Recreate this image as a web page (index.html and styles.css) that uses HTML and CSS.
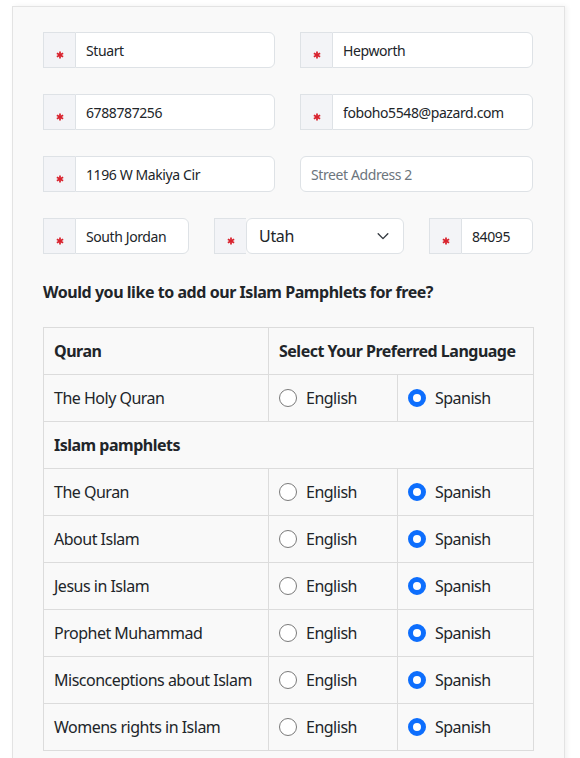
FILE: index.html
```html
<!DOCTYPE html>
<html>
<head>
<meta charset="utf-8">
<link rel="stylesheet" href="styles.css">
</head>
<body>
<div class="card">
  <div class="row row-2">
    <div class="group"><span class="req"><svg viewBox="0 0 10 10"><g stroke="#d9232e" stroke-width="2.2"><line x1="5" y1="0.5" x2="5" y2="9.5"/><line x1="1.1" y1="2.75" x2="8.9" y2="7.25"/><line x1="1.1" y1="7.25" x2="8.9" y2="2.75"/></g></svg></span><input class="field" value="Stuart"></div>
    <div class="group"><span class="req"><svg viewBox="0 0 10 10"><g stroke="#d9232e" stroke-width="2.2"><line x1="5" y1="0.5" x2="5" y2="9.5"/><line x1="1.1" y1="2.75" x2="8.9" y2="7.25"/><line x1="1.1" y1="7.25" x2="8.9" y2="2.75"/></g></svg></span><input class="field" value="Hepworth"></div>
  </div>
  <div class="row row-2">
    <div class="group"><span class="req"><svg viewBox="0 0 10 10"><g stroke="#d9232e" stroke-width="2.2"><line x1="5" y1="0.5" x2="5" y2="9.5"/><line x1="1.1" y1="2.75" x2="8.9" y2="7.25"/><line x1="1.1" y1="7.25" x2="8.9" y2="2.75"/></g></svg></span><input class="field" value="6788787256"></div>
    <div class="group"><span class="req"><svg viewBox="0 0 10 10"><g stroke="#d9232e" stroke-width="2.2"><line x1="5" y1="0.5" x2="5" y2="9.5"/><line x1="1.1" y1="2.75" x2="8.9" y2="7.25"/><line x1="1.1" y1="7.25" x2="8.9" y2="2.75"/></g></svg></span><input class="field" value="foboho5548@pazard.com"></div>
  </div>
  <div class="row row-2">
    <div class="group"><span class="req"><svg viewBox="0 0 10 10"><g stroke="#d9232e" stroke-width="2.2"><line x1="5" y1="0.5" x2="5" y2="9.5"/><line x1="1.1" y1="2.75" x2="8.9" y2="7.25"/><line x1="1.1" y1="7.25" x2="8.9" y2="2.75"/></g></svg></span><input class="field" value="1196 W Makiya Cir"></div>
    <div class="group"><input class="field solo" placeholder="Street Address 2"></div>
  </div>
  <div class="row row-3">
    <div class="group"><span class="req"><svg viewBox="0 0 10 10"><g stroke="#d9232e" stroke-width="2.2"><line x1="5" y1="0.5" x2="5" y2="9.5"/><line x1="1.1" y1="2.75" x2="8.9" y2="7.25"/><line x1="1.1" y1="7.25" x2="8.9" y2="2.75"/></g></svg></span><input class="field" value="South Jordan"></div>
    <div class="group"><span class="req"><svg viewBox="0 0 10 10"><g stroke="#d9232e" stroke-width="2.2"><line x1="5" y1="0.5" x2="5" y2="9.5"/><line x1="1.1" y1="2.75" x2="8.9" y2="7.25"/><line x1="1.1" y1="7.25" x2="8.9" y2="2.75"/></g></svg></span>
      <div class="select-wrap">
        <select class="select"><option>Utah</option></select>
        <svg class="chev" viewBox="0 0 16 16"><path d="M2.5 5.5 8 11l5.5-5.5" fill="none" stroke="#343a40" stroke-width="1.6" stroke-linecap="round" stroke-linejoin="round"/></svg>
      </div>
    </div>
    <div class="group"><span class="req"><svg viewBox="0 0 10 10"><g stroke="#d9232e" stroke-width="2.2"><line x1="5" y1="0.5" x2="5" y2="9.5"/><line x1="1.1" y1="2.75" x2="8.9" y2="7.25"/><line x1="1.1" y1="7.25" x2="8.9" y2="2.75"/></g></svg></span><input class="field" value="84095"></div>
  </div>

  <p class="question">Would you like to add our Islam Pamphlets for free?</p>

  <table class="pamphlets">
    <colgroup><col class="c1"><col class="c2"><col class="c3"></colgroup>
    <tr><th>Quran</th><th colspan="2">Select Your Preferred Language</th></tr>
    <tr><td>The Holy Quran</td><td><label class="opt"><span class="radio"></span>English</label></td><td><label class="opt"><span class="radio on"></span>Spanish</label></td></tr>
    <tr><th colspan="3">Islam pamphlets</th></tr>
    <tr><td>The Quran</td><td><label class="opt"><span class="radio"></span>English</label></td><td><label class="opt"><span class="radio on"></span>Spanish</label></td></tr>
    <tr><td>About Islam</td><td><label class="opt"><span class="radio"></span>English</label></td><td><label class="opt"><span class="radio on"></span>Spanish</label></td></tr>
    <tr><td>Jesus in Islam</td><td><label class="opt"><span class="radio"></span>English</label></td><td><label class="opt"><span class="radio on"></span>Spanish</label></td></tr>
    <tr><td>Prophet Muhammad</td><td><label class="opt"><span class="radio"></span>English</label></td><td><label class="opt"><span class="radio on"></span>Spanish</label></td></tr>
    <tr><td>Misconceptions about Islam</td><td><label class="opt"><span class="radio"></span>English</label></td><td><label class="opt"><span class="radio on"></span>Spanish</label></td></tr>
    <tr><td>Womens rights in Islam</td><td><label class="opt"><span class="radio"></span>English</label></td><td><label class="opt"><span class="radio on"></span>Spanish</label></td></tr>
  </table>
</div>
</body>
</html>
```

FILE: styles.css
```css
html, body {
  margin: 0;
  padding: 0;
  background: #ffffff;
  font-family: "Segoe UI", "Noto Sans", "Open Sans", sans-serif;
  color: #212529;
  overflow: hidden;
}

.card {
  margin: 6px 15px 0 12px;
  padding: 25px 31px 40px 30px;
  background: #f9f9f9;
  border: 1px solid #e3e3e3;
  box-shadow: 2px 0 5px rgba(0, 0, 0, 0.06);
  min-height: 800px;
}

.row {
  display: grid;
  column-gap: 25px;
  margin-bottom: 26px;
}

.row-2 { grid-template-columns: 232px 233px; }
.row-3 { grid-template-columns: 146px 190px 104px; }

.group {
  display: flex;
  height: 36px;
}

.req {
  flex: 0 0 32px;
  box-sizing: border-box;
  border: 1px solid #dee2e6;
  border-right: none;
  background: #f3f4f7;
  display: flex;
  justify-content: center;
  padding-top: 18px;
}

.req svg {
  width: 8px;
  height: 8px;
}

.field {
  flex: 1;
  min-width: 0;
  box-sizing: border-box;
  height: 36px;
  margin: 0;
  border: 1px solid #dee2e6;
  border-radius: 0 6px 6px 0;
  background: #ffffff;
  padding: 0 10px;
  font-family: inherit;
  font-size: 14px;
  letter-spacing: -0.4px;
  color: #212529;
  outline: none;
}

.field.solo {
  border-radius: 6px;
}

.field::placeholder {
  color: #6c757d;
}

.select-wrap {
  flex: 1;
  position: relative;
}

.select {
  appearance: none;
  -webkit-appearance: none;
  width: 100%;
  height: 36px;
  box-sizing: border-box;
  margin: 0;
  border: 1px solid #dee2e6;
  border-radius: 6px;
  background: #ffffff;
  padding: 0 12px;
  font-family: inherit;
  font-size: 16px;
  letter-spacing: -0.3px;
  color: #212529;
  outline: none;
}

.chev {
  position: absolute;
  right: 14px;
  top: 11px;
  width: 14px;
  height: 14px;
  pointer-events: none;
}

.question {
  margin: 26px 0 23px;
  font-size: 16px;
  font-weight: 700;
  line-height: 24px;
  letter-spacing: -0.45px;
}

.pamphlets {
  width: 490px;
  border-collapse: collapse;
  table-layout: fixed;
  font-size: 16px;
  letter-spacing: -0.5px;
}

.c1 { width: 225px; }
.c2 { width: 129px; }
.c3 { width: 136px; }

.pamphlets th,
.pamphlets td {
  border: 1px solid #dcdcdc;
  padding: 11px 10px;
  line-height: 24px;
  text-align: left;
  white-space: nowrap;
}

.pamphlets th {
  font-weight: 700;
}

.opt {
  display: flex;
  align-items: center;
  gap: 9px;
}

.radio {
  box-sizing: border-box;
  width: 18px;
  height: 18px;
  border-radius: 50%;
  border: 1px solid #7a7a7a;
  background: #ffffff;
}

.radio.on {
  border: 5px solid #0d6efd;
}
```
